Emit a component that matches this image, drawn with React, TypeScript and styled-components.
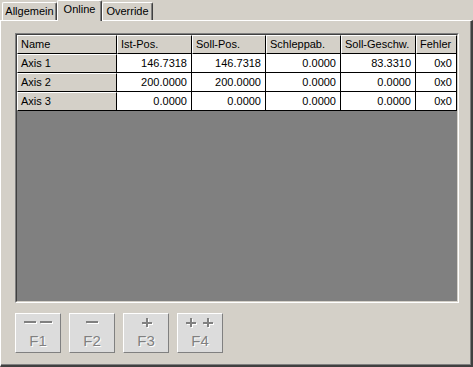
import React from "react";
import styled, { createGlobalStyle } from "styled-components";

const Global = createGlobalStyle`
  html, body { margin: 0; padding: 0; background: #d4d0c8; }
  body { font-family: "Liberation Sans", Arial, sans-serif; font-size: 11px; }
`;

const Window = styled.div`
  width: 473px;
  height: 367px;
  display: flex;
  flex-direction: column;
  background: #d4d0c8;
  overflow: hidden;
  color: #000;
`;

const TabStrip = styled.div`
  height: 20px;
  flex: none;
  display: flex;
  align-items: flex-end;
  padding-left: 2px;
`;

const Tab = styled.div<{ $active?: boolean; $w: number }>`
  box-sizing: border-box;
  width: ${(p) => p.$w}px;
  height: ${(p) => (p.$active ? 21 : 18)}px;
  margin-bottom: ${(p) => (p.$active ? -1 : 0)}px;
  position: relative;
  z-index: ${(p) => (p.$active ? 1 : 0)};
  background: #d4d0c8;
  border-top: 1px solid #fff;
  border-left: 1px solid #fff;
  border-right: 1px solid #404040;
  box-shadow: inset -1px 0 #808080;
  border-radius: 2px 2px 0 0;
  display: flex;
  align-items: center;
  justify-content: center;
  padding-bottom: ${(p) => (p.$active ? 3 : 0)}px;
  line-height: 13px;
  white-space: nowrap;
`;

const Panel = styled.div`
  flex: 1;
  box-sizing: border-box;
  border-top: 1px solid #fff;
  border-left: 1px solid #fff;
  border-right: 2px solid #404040;
  border-bottom: 2px solid #404040;
  box-shadow: inset -1px -1px #808080;
  padding: 12px 0 0 14px;
  display: flex;
  flex-direction: column;
  gap: 10px;
`;

const GridFrame = styled.div`
  width: 444px;
  height: 270px;
  box-sizing: border-box;
  border: 1px solid;
  border-color: #808080 #fff #fff #808080;
  display: flex;
`;

const GridInner = styled.div`
  flex: 1;
  border: 1px solid;
  border-color: #404040 #d4d0c8 #d4d0c8 #404040;
  background: #808080;
`;

const Table = styled.div`
  display: grid;
  grid-template-columns: 100px 75px 74px 75px 75px 41px;
  grid-auto-rows: 19px;
`;

const HeadCell = styled.div`
  box-sizing: border-box;
  background: #d4d0c8;
  border-top: 1px solid #fff;
  border-left: 1px solid #fff;
  border-right: 1px solid #000;
  border-bottom: 1px solid #000;
  padding-left: 3px;
  display: flex;
  align-items: center;
  line-height: 13px;
  white-space: nowrap;
  overflow: hidden;
`;

const DataCell = styled.div`
  box-sizing: border-box;
  background: #fff;
  border-right: 1px solid #000;
  border-bottom: 1px solid #000;
  padding-right: 4px;
  display: flex;
  align-items: center;
  justify-content: flex-end;
  line-height: 13px;
  white-space: nowrap;
`;

const ButtonRow = styled.div`
  display: flex;
  gap: 8px;
`;

const FButton = styled.button`
  width: 46px;
  height: 40px;
  box-sizing: border-box;
  margin: 0;
  padding: 4px 0 0;
  background: #dcdcdc;
  border: 1px solid;
  border-color: #fff #808080 #808080 #fff;
  display: flex;
  flex-direction: column;
  align-items: center;
  gap: 3px;
  font-family: "Liberation Sans", Arial, sans-serif;
  font-size: 15px;
  line-height: 17px;
  color: #808080;
  text-shadow: 1px 1px 0 #fff;
`;

const Label = styled.span`
  display: block;
`;

type Kind = "mm" | "m" | "p" | "pp";

const Minus = ({ cx }: { cx: number }) => (
  <>
    <rect x={cx - 6 + 1} y={4} width={12} height={2} fill="#fff" />
    <rect x={cx - 6} y={3} width={12} height={2} fill="#808080" />
  </>
);

const Plus = ({ cx }: { cx: number }) => (
  <>
    <rect x={cx - 5 + 1} y={5} width={10} height={2} fill="#fff" />
    <rect x={cx} y={1} width={2} height={9} fill="#fff" />
    <rect x={cx - 5} y={4} width={10} height={2} fill="#808080" />
    <rect x={cx - 1} y={0} width={2} height={9} fill="#808080" />
  </>
);

const Glyph = ({ kind }: { kind: Kind }) => (
  <svg width="30" height="11" viewBox="0 0 30 11">
    {kind === "mm" && (
      <>
        <Minus cx={7} />
        <Minus cx={23} />
      </>
    )}
    {kind === "m" && <Minus cx={15} />}
    {kind === "p" && <Plus cx={16} />}
    {kind === "pp" && (
      <>
        <Plus cx={6} />
        <Plus cx={23} />
      </>
    )}
  </svg>
);

const headers = ["Name", "Ist-Pos.", "Soll-Pos.", "Schleppab.", "Soll-Geschw.", "Fehler"];
const rows = [
  ["Axis 1", "146.7318", "146.7318", "0.0000", "83.3310", "0x0"],
  ["Axis 2", "200.0000", "200.0000", "0.0000", "0.0000", "0x0"],
  ["Axis 3", "0.0000", "0.0000", "0.0000", "0.0000", "0x0"],
];

const buttons: { kind: Kind; label: string }[] = [
  { kind: "mm", label: "F1" },
  { kind: "m", label: "F2" },
  { kind: "p", label: "F3" },
  { kind: "pp", label: "F4" },
];

export default function App() {
  return (
    <>
      <Global />
      <Window>
        <TabStrip>
          <Tab $w={55}>Allgemein</Tab>
          <Tab $w={45} $active>
            Online
          </Tab>
          <Tab $w={51}>Override</Tab>
        </TabStrip>
        <Panel>
          <GridFrame>
            <GridInner>
              <Table>
                {headers.map((h) => (
                  <HeadCell key={h}>{h}</HeadCell>
                ))}
                {rows.map((r) => (
                  <React.Fragment key={r[0]}>
                    <HeadCell>{r[0]}</HeadCell>
                    {r.slice(1).map((v, i) => (
                      <DataCell key={i}>{v}</DataCell>
                    ))}
                  </React.Fragment>
                ))}
              </Table>
            </GridInner>
          </GridFrame>
          <ButtonRow>
            {buttons.map((b) => (
              <FButton key={b.label} disabled>
                <Glyph kind={b.kind} />
                <Label>{b.label}</Label>
              </FButton>
            ))}
          </ButtonRow>
        </Panel>
      </Window>
    </>
  );
}
